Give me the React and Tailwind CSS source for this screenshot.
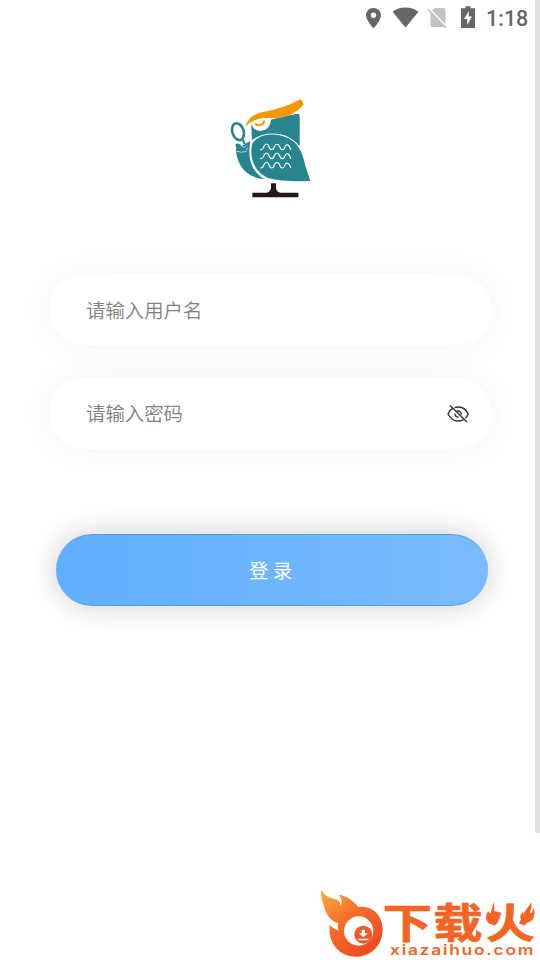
import React, { useState } from 'react';

const StatusBar = () => (
    <div className="flex h-9 w-full items-center text-[#666666]">
        <svg className="ml-[365px] h-[22px] w-[17px] shrink-0" viewBox="0 0 17 22" fill="currentColor">
            <path d="M8.5 1C4.2 1 1 4.2 1 8.3C1 13.5 8.5 21.5 8.5 21.5S16 13.5 16 8.3C16 4.2 12.8 1 8.5 1ZM8.5 5.6A2.7 2.7 0 1 1 8.5 11A2.7 2.7 0 1 1 8.5 5.6Z" fillRule="evenodd" />
        </svg>
        <svg className="ml-[10px] h-[22px] w-[27px] shrink-0" viewBox="0 0 27 22" fill="currentColor">
            <path d="M13.5 20.5L.5 4.8C7.5-1 19.5-1 26.5 4.8Z" />
        </svg>
        <svg className="ml-[8px] h-[22px] w-[21px] shrink-0" viewBox="0 0 21 22">
            <path d="M7.500 1H16.5Q18.500 1 18.500 3V18Q18.500 20 16.500 20H5.500Q3.500 20 3.500 18V5Z" fill="#c3c3c3" />
            <path d="M1.800 1.200L20 20" stroke="white" strokeWidth="1.600" />
            <path d="M.8 2.200L19 21" stroke="#c3c3c3" strokeWidth="1.600" />
        </svg>
        <svg className="mb-[2px] ml-[12px] h-[22px] w-[16px] shrink-0" viewBox="0 0 16 22">
            <path d="M5.500 .3H10.500V2.300H15V22H1V2.300H5.500Z" fill="currentColor" />
            <path d="M8.800 5L4 13H7.200V19L12 10.500H8.800Z" fill="white" />
        </svg>
        <span className="mt-[2px] ml-[10px] font-['Roboto'] text-[21.5px] font-medium leading-none">1:18</span>
    </div>
);

const OwlLogo = () => (
    <svg className="h-[115px] w-[100px]" viewBox="0 0 300 345">
        {/* head and back */}
        <path d="M94 106L125 96L208 76L234 71Q239 73 239 80V168Q213 139 179 132Q130 125 96 151Z" fill="#288590" />
        {/* eye */}
        <path d="M96 101Q98 122 121 123Q150 122 154 88Z" fill="white" />
        <path d="M107 102C112 108 130 107 132 94" fill="none" stroke="#f39800" strokeWidth="6" strokeLinecap="round" />
        {/* brow */}
        <path d="M76 110Q88 72 132 65C174 57 213 44 238 29C244 28 247 31 251 43C232 66 208 80 175 84C150 86 129 81 106 90Q89 96 76 110Z" fill="#f39800" />
        {/* wing */}
        <path d="M97 160C117 132 158 129 190 139C236 153 248 190 256 227L271 273Q194 277 144 264C98 242 88 199 97 160Z" fill="#288590" />
        {/* front wing with the magnifier */}
        <path d="M48 180L80 159L91 153C82 201 92 243 133 267C78 265 50 222 48 180Z" fill="#288590" />
        <ellipse cx="54" cy="125" rx="17" ry="26" fill="white" stroke="#288590" strokeWidth="8" transform="rotate(-18 54 125)" />
        <path d="M68 149L74 162" stroke="#288590" strokeWidth="6" />
        <path d="M46 164C54 156 60 163 66 168L80 160L84 174L76 187H52Q44 184 49 176Z" fill="#288590" />
        <path d="M49 184Q62 188 78 185L82 173" fill="none" stroke="white" strokeWidth="2" />
        <path d="M62 166L71 172L80 166" fill="none" stroke="white" strokeWidth="2" />
        {/* feathers */}
        <g fill="none" stroke="white" strokeWidth="3.5" strokeLinecap="round">
            {[179, 206, 234].map((y) => (
                <path key={y} transform={`translate(122 ${y})`} d="M0 0C8 1 8-7 11-12C15-18 22-18 24-11C27-4 27 0 33 0C39 0 39-6 42-11C45-18 53-18 56-11C59-4 59 0 65 0C71 0 71-6 74-11C77-18 85-14 87-8L90-1" />
            ))}
        </g>
        {/* perch */}
        <path d="M153 280H168V295Q171 308 182 308H235V322H97V308H140Q150 307 153 295Z" fill="#231815" />
    </svg>
);

const EyeOff = () => (
    <svg className="h-[22px] w-[24px]" viewBox="0 0 24 22" fill="none" stroke="#333333" strokeWidth="1.4">
        <path d="M7 5.200Q4 6.700 2 11Q6 18 12.200 18Q15.200 18 17.500 16.600M8.500 4.600Q18 1.800 22.200 11Q21.200 13.400 19.400 15" />
        <path d="M10.500 8.200Q14.900 7.300 15.500 11.600M8.900 10.600Q9 14.300 12.700 14.300" />
        <path d="M4 2.500L21 19" />
    </svg>
);

const SiteLogo = () => (
    <svg className="h-20 w-[230px]" viewBox="0 0 230 80">
        <defs>
            <linearGradient id="flame" x1="0" y1="0" x2="0.65" y2="1">
                <stop offset="0" stopColor="#ffad3d" />
                <stop offset="0.5" stopColor="#f56c2b" />
                <stop offset="1" stopColor="#ef4b22" />
            </linearGradient>
        </defs>
        <g transform="scale(.33333)">
            <path d="M34 29C45 51 63 53 83 60C89 65 91 70 91 77C99 67 94 54 86 44C117 49 132 66 145 81C186 75 218 106 218 148C218 194 184 230 141 230C89 230 53 191 59 134C66 143 75 148 86 151C82 141 82 136 86 130C60 123 49 103 43 82C37 62 31 47 34 29Z" fill="url(#flame)" />
            <circle cx="146" cy="153" r="44" fill="white" />
            <circle cx="160" cy="164" r="27" fill="#f05a28" />
            <path d="M155 149H165V160H173L160 172L147 160H155ZM145 176H175V181H145Z" fill="white" />
        </g>
        <g fill="#f26522">
            <text
                transform="translate(0 57.500) scale(1.2 1)"
                x="60.700 102.700 146.500"
                y="0"
                fontSize="41"
                stroke="#f26522"
                strokeWidth="0.7"
                className="font-['Noto_Sans_CJK_SC',sans-serif] font-bold"
            >
                下载火
            </text>
            <path d="M183 44C176 39 180 34 181 31C183 34 184 34 184 31C186 28 185 25 187 22C188 28 187 32 187 35C190 34 190 32 190 30C194 39 190 44 183 44Z" transform="translate(-3 0)" />
            <path d="M216 43C208 38 212 34 214 32C214 35 215 36 216 34C216 29 221 26 222 22C224 27 220 32 221 34C224 33 224 29 225 27C227 38 223 43 216 43Z" transform="translate(-1 0)" />
            <text transform="translate(80 75) scale(1.2 1)" fontSize="14.500" textLength="119.500" lengthAdjust="spacing" className="font-['Inter',sans-serif] font-semibold">xiazaihuo.com</text>
        </g>
    </svg>
);

const App = () => {
    const [username, setUsername] = useState('');
    const [password, setPassword] = useState('');
    const [showPassword, setShowPassword] = useState(false);

    return (
        <div className="relative flex h-[960px] w-[540px] flex-col overflow-hidden bg-white font-['Noto_Sans_CJK_SC',sans-serif]">
            <div className="absolute top-0 right-0 h-[833px] w-[5px] bg-[#e0e0e0]" />
            <StatusBar />

            <div className="mt-[54px] flex justify-center">
                <OwlLogo />
            </div>

            {/* Login form */}
            <form className="mt-[70px] flex flex-col pl-[49px]" onSubmit={(e) => e.preventDefault()}>
                <div className="relative z-10 flex h-[70px] w-[443px] items-center rounded-full bg-white pl-[37px] shadow-[0_0_34px_rgba(50,90,100,0.07)]">
                    <input
                        className="mb-[1px] w-[340px] text-[19.4px] font-[350] text-[#808080] outline-none placeholder:text-[#808080]"
                        placeholder="请输入用户名"
                        value={username}
                        onChange={(e) => setUsername(e.target.value)}
                    />
                </div>
                <div className="mt-[33px] flex h-[71px] w-[443px] items-center rounded-full bg-white pl-[37px] shadow-[0_0_34px_rgba(50,90,100,0.07)]">
                    <input
                        className="mb-[2px] w-[340px] text-[19.4px] font-[350] text-[#808080] outline-none placeholder:text-[#808080]"
                        type={showPassword ? 'text' : 'password'}
                        placeholder="请输入密码"
                        value={password}
                        onChange={(e) => setPassword(e.target.value)}
                    />
                    <button type="button" className="ml-[20px]" aria-label="显示密码" onClick={() => setShowPassword(!showPassword)}>
                        <EyeOff />
                    </button>
                </div>
                <button
                    type="submit"
                    className="mt-[85px] ml-[6.5px] h-[72px] w-[432px] rounded-full border-y border-[#559edf] bg-linear-to-r from-[#60afff] to-[#79bbff] pr-[2px] text-[19.4px] text-white shadow-[0_0_30px_rgba(0,0,0,0.2)]"
                >
                    登 录
                </button>
            </form>

            <div className="mt-auto ml-[310px]">
                <SiteLogo />
            </div>
        </div>
    );
};

export default App;
